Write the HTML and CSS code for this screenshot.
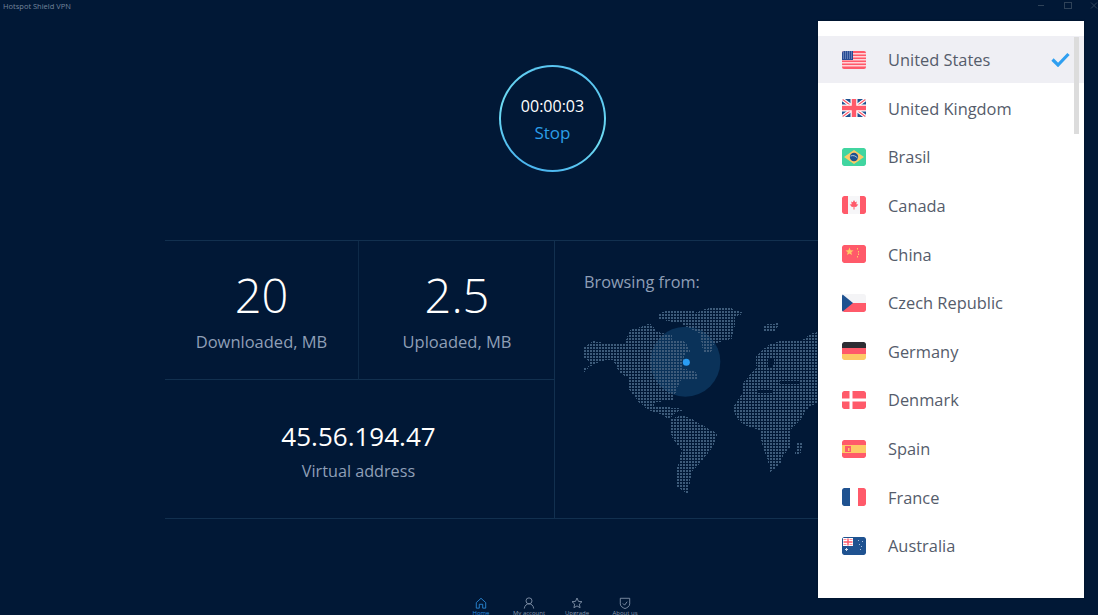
FILE: index.html
```html
<!DOCTYPE html>
<html lang="en">
<head>
    <meta charset="UTF-8">
    <meta name="viewport" content="width=device-width, initial-scale=1.0">
    <title>Hotspot Shield VPN</title>
    <link rel="stylesheet" href="styles.css">
</head>
<body>
    <header class="titlebar">
        <span class="app-name">Hotspot Shield VPN</span>
        <div class="window-buttons">
            <svg width="8" height="8" viewBox="0 0 8 8"><path d="M1 3.500h6" stroke="#2f4258" fill="none"/></svg>
            <svg width="8" height="8" viewBox="0 0 8 8"><rect x=".5" y=".5" width="7" height="6" stroke="#2f4258" fill="none"/></svg>
            <svg width="8" height="8" viewBox="0 0 8 8"><path d="M1 .5l6 6M7 .5l-6 6" stroke="#2f4258" fill="none"/></svg>
        </div>
    </header>

    <section class="timer-wrap">
        <div class="timer">
            <span class="timer-time">00:00:03</span>
            <span class="timer-stop">Stop</span>
        </div>
    </section>

    <section class="stats">
        <div class="stats-left">
            <div class="stat stat-down">
                <span class="stat-value">20</span>
                <span class="stat-label">Downloaded, MB</span>
            </div>
            <div class="stat stat-up">
                <span class="stat-value">2.5</span>
                <span class="stat-label">Uploaded, MB</span>
            </div>
            <div class="stat stat-address">
                <span class="address-value">45.56.194.47</span>
                <span class="stat-label address-label">Virtual address</span>
            </div>
        </div>
        <div class="browsing">
            <h2 class="browsing-title">Browsing from:</h2>
            <svg class="world-map" width="236" height="195" viewBox="42 45 708 585">
                <defs>
                    <pattern id="dots" width="9" height="9" patternUnits="userSpaceOnUse" x="42" y="45">
                        <rect width="6" height="6" fill="#3d5b7a"/>
                    </pattern>
                </defs>
                <circle cx="346" cy="215" r="105" fill="#0a3259"/>
                <!-- continents, filled with the dot pattern -->
                <g fill="url(#dots)" fill-rule="evenodd" shape-rendering="crispEdges">
                    <path d="M265 72L300 59 370 59 372 70 400 59 435 50 475 50 495 60 522 70 495 80 495 105 485 147 450 155 430 165 422 190 400 188 390 130 345 108 335 100 320 100 265 85Z"/>
                    <path d="M42 170L70 154 130 162 168 160 170 145 180 120 215 110 240 100 262 125 280 130 305 135 305 150 345 155 362 183 342 195 340 236 375 245 387 265 330 272 316 310 306 332 255 336 250 350 275 350 350 358 322 365 298 388 270 372 232 358 205 335 178 300 175 262 158 255 140 235 130 210 95 212 60 230 42 248 42 235 62 225 60 215 42 205Z"/>
                    <path d="M300 388L332 376 362 385 396 405 442 430 432 466 396 512 366 546 352 612 320 590 318 545 328 510 335 480 310 450 300 420Z"/>
                    <path d="M490 350L515 312 518 280 542 252 560 235 558 198 595 165 628 153 695 152 725 130 750 125 750 335 716 350 690 392 662 420 662 470 640 496 632 520 600 548 594 510 578 470 568 420 525 405 510 396 496 376ZM595 205L612 205 610 230 595 232ZM630 272L690 272 690 281 630 281ZM560 300L610 300 610 308 560 308Z"/>
                    <path d="M680 458L698 456 690 495 675 494Z"/>
                    <path d="M578 105L628 99 616 123 578 123Z"/>
                </g>
                <circle cx="349" cy="217" r="10.5" fill="#2a9df4"/>
            </svg>
        </div>
    </section>

    <nav class="bottom-nav">
        <a class="nav-item nav-active">
            <svg width="12" height="12" viewBox="0 0 14 14" fill="none" stroke="currentColor"><path d="M1.5 6.500L7 1.500l5.500 5v6.500h-3.500v-4.500h-4v4.500h-3.500z"/></svg>
            <span>Home</span>
        </a>
        <a class="nav-item">
            <svg width="12" height="12" viewBox="0 0 14 14" fill="none" stroke="currentColor"><circle cx="7" cy="4.500" r="3.500"/><path d="M1.500 13.500c.5-4 3-5.500 5.500-5.500s5 1.500 5.500 5.500"/></svg>
            <span>My account</span>
        </a>
        <a class="nav-item">
            <svg width="12" height="12" viewBox="0 0 14 14" fill="none" stroke="currentColor"><path d="M7 1.200l1.700 3.900 4.100.4-3.100 2.800.9 4.200L7 10.400l-3.600 2.100.9-4.200L1.200 5.500l4.100-.4z"/></svg>
            <span>Upgrade</span>
        </a>
        <a class="nav-item">
            <svg width="12" height="12" viewBox="0 0 14 14" fill="none" stroke="currentColor"><path d="M1.500 1.500h11v6.500c0 3-3 4.500-5.500 5.500-2.500-1-5.500-2.500-5.500-5.500z"/><path d="M4.500 7.500l2 2 3-4"/></svg>
            <span>About us</span>
        </a>
    </nav>

    <!-- country dropdown -->
    <aside class="country-menu">
        <ul class="country-list">
            <li class="country country-selected">
                <svg class="flag" viewBox="0 0 24 18">
                    <rect width="24" height="18" fill="#ff5a6a"/>
                    <path d="M0 2h24v1.500H0zM0 5h24v1.500H0zM0 8h24v1.500H0zM0 11h24v1.500H0zM0 14h24v1.500H0z" fill="#ffd4d8"/>
                    <rect width="11" height="9" fill="#274b93"/>
                    <path d="M1 1h9M1 3h9M1 5h9M1 7h9" stroke="#9db0d6" stroke-dasharray="1 1"/>
                </svg>
                <span class="country-name">United States</span>
                <svg class="check" width="19" height="15" viewBox="0 0 19 15"><path d="M1.500 7.500l5.500 5.500L17.500 2" fill="none" stroke="#2f9ff0" stroke-width="3.200"/></svg>
            </li>
            <li class="country">
                <svg class="flag" viewBox="0 0 24 18">
                    <rect width="24" height="18" rx="2" fill="#1f5290"/>
                    <path d="M0 0l24 18M24 0L0 18" stroke="#fff" stroke-width="3.500"/>
                    <path d="M0 0l24 18M24 0L0 18" stroke="#ff5a6a" stroke-width="1.300"/>
                    <path d="M12 0v18M0 9h24" stroke="#fff" stroke-width="7"/>
                    <path d="M12 0v18M0 9h24" stroke="#ff5a6a" stroke-width="4.500"/>
                </svg>
                <span class="country-name">United Kingdom</span>
            </li>
            <li class="country">
                <svg class="flag" viewBox="0 0 24 18">
                    <rect width="24" height="18" rx="2" fill="#41d5a0"/>
                    <path d="M12 2L22 9l-10 7L2 9z" fill="#fdca66"/>
                    <circle cx="12" cy="9" r="4.200" fill="#1f5290"/>
                    <path d="M8.500 8c3-1 5-.2 7 2" stroke="#d8e4ee" fill="none" stroke-width=".8"/>
                </svg>
                <span class="country-name">Brasil</span>
            </li>
            <li class="country">
                <svg class="flag" viewBox="0 0 24 18">
                    <rect width="24" height="18" rx="2" fill="#ff5a6a"/>
                    <rect x="6" width="12" height="18" fill="#f6f6f8"/>
                    <path d="M12 4l1.200 2.200 1.600-.6-.5 2.700 2 .2-2.200 2.600-1.600-.4V13.500h-1V10.700l-1.600.4-2.200-2.600 2-.2-.5-2.700 1.600.6z" fill="#ff5a6a"/>
                </svg>
                <span class="country-name">Canada</span>
            </li>
            <li class="country">
                <svg class="flag" viewBox="0 0 24 18">
                    <rect width="24" height="18" rx="2" fill="#ff5a6a"/>
                    <path d="M7.500 2.500l1.100 2.700 2.900.2-2.200 1.900.7 2.800-2.500-1.500L5 10.100l.7-2.800-2.200-1.900 2.900-.2z" fill="#fdca66"/>
                    <path d="M15 3h1v1.500h-1zM16 6h1v1.500h-1zM16 8.500h1V10h-1zM15 11h1v1.500h-1z" fill="#fdca66"/>
                </svg>
                <span class="country-name">China</span>
            </li>
            <li class="country">
                <svg class="flag" viewBox="0 0 24 18">
                    <rect width="24" height="18" rx="2" fill="#f4f4f6"/>
                    <path d="M0 9h24v7a2 2 0 0 1-2 2H2a2 2 0 0 1-2-2z" fill="#ff5a6a"/>
                    <path d="M0 0l11 9-11 9z" fill="#1f5290"/>
                </svg>
                <span class="country-name">Czech Republic</span>
            </li>
            <li class="country">
                <svg class="flag" viewBox="0 0 24 18">
                    <path d="M2 0h20a2 2 0 0 1 2 2v4H0V2a2 2 0 0 1 2-2z" fill="#2d2d33"/>
                    <rect y="6" width="24" height="6" fill="#ff5a6a"/>
                    <path d="M0 12h24v4a2 2 0 0 1-2 2H2a2 2 0 0 1-2-2z" fill="#fdca66"/>
                </svg>
                <span class="country-name">Germany</span>
            </li>
            <li class="country">
                <svg class="flag" viewBox="0 0 24 18">
                    <rect width="24" height="18" rx="2" fill="#ff5a6a"/>
                    <path d="M9 0v18M0 9h24" stroke="#fff" stroke-width="3"/>
                </svg>
                <span class="country-name">Denmark</span>
            </li>
            <li class="country">
                <svg class="flag" viewBox="0 0 24 18">
                    <rect width="24" height="18" rx="2" fill="#ff5a6a"/>
                    <rect y="5" width="24" height="8" fill="#fdca66"/>
                    <rect x="3" y="6" width="6" height="6" fill="#ff5a6a"/>
                    <rect x="6" y="8" width="1.500" height="3" fill="#fdca66"/>
                </svg>
                <span class="country-name">Spain</span>
            </li>
            <li class="country">
                <svg class="flag" viewBox="0 0 24 18">
                    <path d="M2 0h6v18H2a2 2 0 0 1-2-2V2a2 2 0 0 1 2-2z" fill="#1f5290"/>
                    <rect x="8" width="8" height="18" fill="#fff"/>
                    <path d="M16 0h6a2 2 0 0 1 2 2v14a2 2 0 0 1-2 2h-6z" fill="#ff5a6a"/>
                </svg>
                <span class="country-name">France</span>
            </li>
            <li class="country">
                <svg class="flag" viewBox="0 0 24 18">
                    <rect width="24" height="18" rx="2" fill="#1f5290"/>
                    <rect x="1" y="1" width="10" height="8" fill="#fff"/>
                    <path d="M6 1.500v7M1.500 5h9" stroke="#ff5a6a" stroke-width="1.500"/>
                    <path d="M1.500 2.500h3M7.500 7.500h3M1.500 7.500h3M7.500 2.500h3" stroke="#ff5a6a" stroke-width=".7"/>
                    <path d="M3 12.500h3M4.500 11v3" stroke="#d5dff0" stroke-width="1"/>
                    <path d="M16 3h1v1h-1zM20 4h1v1h-1zM17 7h1v1h-1zM19 9h1v1h-1zM18 12h1v1h-1z" fill="#a9bddb"/>
                </svg>
                <span class="country-name">Australia</span>
            </li>
        </ul>
        <div class="scroll-thumb"></div>
    </aside>
</body>
</html>
```

FILE: styles.css
```css
* {
    box-sizing: border-box;
}

html, body {
    height: 615px;
}

body {
    margin: 0;
    overflow: hidden;
    position: relative;
    display: flex;
    flex-direction: column;
    background-color: #011836;
    color: #ffffff;
    font-family: "Open Sans", "Noto Sans", sans-serif;
}

.titlebar {
    height: 12px;
    flex-shrink: 0;
    display: flex;
    justify-content: space-between;
    align-items: center;
    padding-left: 3px;
}

.app-name {
    font-size: 7.5px;
    color: #74859c;
}

.window-buttons {
    display: flex;
    gap: 18.5px;
}

.timer-wrap {
    display: flex;
    flex-shrink: 0;
    justify-content: center;
    padding: 53px 0 0 7px;
}

.timer {
    width: 107px;
    height: 107px;
    border: 2.5px solid transparent;
    border-radius: 50%;
    background: linear-gradient(#011836, #011836) padding-box,
        linear-gradient(200deg, #52bdf0, #6fdcf2 55%, #3fa9ef) border-box;
    display: flex;
    flex-direction: column;
    align-items: center;
    justify-content: center;
    gap: 3px;
    padding-top: 2px;
}

.timer-time {
    font-size: 16px;
    line-height: 23px;
}

.timer-stop {
    font-size: 17px;
    line-height: 24px;
    color: #2b9ee8;
}

.stats {
    display: flex;
    flex-shrink: 0;
    margin: 68px 0 0 165px;
    height: 279px;
    width: 653px;
    border-top: 1px solid #12304f;
    border-bottom: 1px solid #12304f;
}

.stats-left {
    width: 390px;
    display: grid;
    grid-template-columns: 194px 196px;
    grid-template-rows: 139px 1fr;
    border-right: 1px solid #12304f;
}

.stat {
    display: flex;
    flex-direction: column;
    align-items: center;
    color: #8f9fb6;
}

.stat-down {
    border-right: 1px solid #0e2a48;
    border-bottom: 1px solid #12304f;
}

.stat-up {
    border-bottom: 1px solid #12304f;
}

.stat-address {
    grid-column: 1 / 3;
    padding: 38px 3px 0 0;
}

.stat-value {
    margin-top: 20px;
    font-size: 47px;
    font-weight: 300;
    line-height: 68px;
    color: #ffffff;
}

.address-value {
    font-size: 26px;
    line-height: 36px;
    color: #ffffff;
}

.stat-label {
    font-size: 16.5px;
    line-height: 24px;
    margin-top: 1px;
}

.address-label {
    font-size: 16.2px;
    margin-top: 5px;
}

.browsing {
    flex: 1;
    padding: 29px 0 0 29px;
}

.browsing-title {
    margin: 0;
    font-size: 16.3px;
    font-weight: 400;
    line-height: 24px;
    color: #8f9fb6;
}

.world-map {
    display: block;
    margin-top: 11px;
}

.bottom-nav {
    display: flex;
    justify-content: center;
    padding: 78px 0 0 8px;
}

.nav-item {
    width: 48px;
    display: flex;
    flex-direction: column;
    align-items: center;
    color: #8898ae;
    font-size: 6px;
    line-height: 8px;
    white-space: nowrap;
}

.nav-active {
    color: #2b8fe0;
}

.country-menu {
    position: absolute;
    top: 21px;
    left: 818px;
    width: 266px;
    height: 577px;
    background-color: #ffffff;
    box-shadow: 0 0 2px rgba(0, 0, 0, 0.3);
}

.country-list {
    list-style: none;
    margin: 0;
    padding: 15px 0 0 0;
    display: flex;
    flex-direction: column;
    gap: 1.65px;
}

.country {
    height: 47px;
    display: flex;
    align-items: center;
    padding-left: 24px;
    color: #555c6b;
    font-size: 16.4px;
}

.country-selected {
    background-color: #efeff4;
}

.flag {
    width: 24px;
    height: 18px;
    flex-shrink: 0;
    margin-right: 22px;
    border-radius: 2px;
}

.check {
    margin-left: auto;
    margin-right: 14px;
}

.scroll-thumb {
    position: absolute;
    top: 16px;
    right: 5px;
    width: 5px;
    height: 97px;
    background-color: #dcdcdc;
}
```
